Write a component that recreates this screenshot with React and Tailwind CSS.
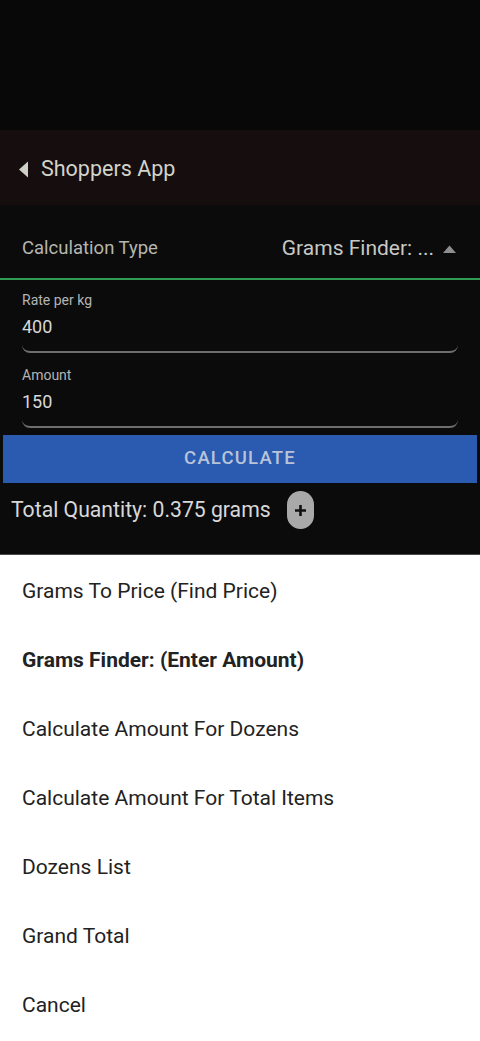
import React from "react";

const OPTIONS = [
  { label: "Grams To Price (Find Price)" },
  { label: "Grams Finder: (Enter Amount)", selected: true },
  { label: "Calculate Amount For Dozens" },
  { label: "Calculate Amount For Total Items" },
  { label: "Dozens List" },
  { label: "Grand Total" },
  { label: "Cancel" },
];

function Field({ label, value, first }) {
  return (
    <div className={first ? "pt-[12px]" : "pt-[14px]"}>
      <div className="pb-[13px] border-b-2 border-[#6e6e6e] rounded-b-[8px]">
        <div className="text-[14px] leading-[16px] text-[#b4b4b4]">{label}</div>
        <div className="mt-[8px] text-[18px] leading-[22px] text-[#d8d8d8]">{value}</div>
      </div>
    </div>
  );
}

export default function App() {
  return (
    <div
      className="w-[480px] h-[1041px] flex flex-col bg-[#080808] overflow-hidden"
      style={{ fontFamily: "Roboto, 'Noto Sans', sans-serif" }}
    >
      <div className="h-[130px] shrink-0" />

      <div className="h-[75px] shrink-0 bg-[#160e0e] flex items-center pl-[18px] pt-[3px]">
        <svg width="11" height="17" viewBox="0 0 11 17" className="mr-[12px]">
          <path d="M10 0.5 L10 16.5 L1 8.5 Z" fill="#cfd0c6" />
        </svg>
        <span className="text-[21.5px] text-[#d2d3c9]">Shoppers App</span>
      </div>

      <div className="h-[73px] shrink-0 bg-[#0b0b0b] flex items-center justify-between pl-[22px] pr-[24px] pt-[14px]">
        <span className="text-[18.5px] text-[#b6b6b0]">Calculation Type</span>
        <div className="flex items-center gap-[9px]">
          <span className="text-[21px] text-[#c8c8c4]">Grams Finder: ...</span>
          <svg width="13" height="8" viewBox="0 0 13 8">
            <path d="M0 8 L6.5 0.5 L13 8 Z" fill="#8e8e8e" />
          </svg>
        </div>
      </div>

      <div className="h-[2px] shrink-0 bg-[#2f9c52]" />

      <div className="bg-[#0b0b0b] px-[22px]">
        <Field label="Rate per kg" value="400" first />
        <Field label="Amount" value="150" />
      </div>

      <div className="bg-[#0b0b0b] pt-[7px] px-[3px]">
        <button className="w-full h-[48px] bg-[#2a5bb1] text-[18.5px] font-medium tracking-[1.2px] text-[#b9c4d8]">
          CALCULATE
        </button>
      </div>

      <div className="h-[72px] shrink-0 bg-[#0b0b0b] border-b border-[#4a4a4a] pl-[11px] pt-[8px]">
        <div className="flex items-center h-[38px] gap-[16px]">
          <span className="text-[21.2px] text-[#d8d8d8]">Total Quantity: 0.375 grams</span>
          <div className="w-[27px] h-[38px] rounded-full bg-[#a9a9a9] flex items-center justify-center">
            <svg width="13" height="13" viewBox="0 0 13 13">
              <path d="M6.5 1 V12 M1 6.5 H12" stroke="#111" strokeWidth="2.6" />
            </svg>
          </div>
        </div>
      </div>

      <div className="flex-1 bg-white pt-[2px]">
        {OPTIONS.map((o) => (
          <div
            key={o.label}
            className={`h-[69px] flex items-center pl-[22px] text-[21px] text-[#222] ${o.selected ? "font-bold" : ""}`}
          >
            {o.label}
          </div>
        ))}
      </div>
    </div>
  );
}
